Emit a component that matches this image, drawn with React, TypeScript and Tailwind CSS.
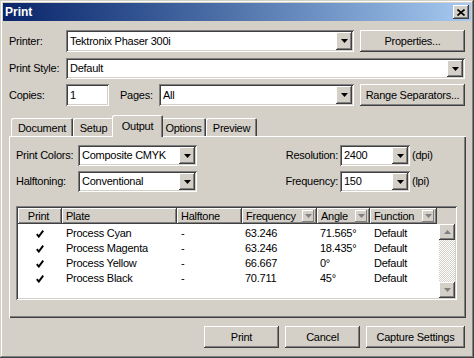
import React from "react";

const raised =
  "shadow-[inset_-1px_-1px_#404040,inset_1px_1px_#ffffff,inset_-2px_-2px_#808080,inset_2px_2px_#d4d0c8]";
const sunken =
  "shadow-[inset_1px_1px_#808080,inset_-1px_-1px_#ffffff,inset_2px_2px_#404040,inset_-2px_-2px_#d4d0c8]";

function Arrow({ up = false, color = "#000" }: { up?: boolean; color?: string }) {
  return (
    <svg width="7" height="4" viewBox="0 0 7 4">
      <polygon points={up ? "3.5,0 7,4 0,4" : "0,0 7,0 3.5,4"} fill={color} />
    </svg>
  );
}

function Combo({ value, w, h = 21 }: { value: string; w: string; h?: number }) {
  return (
    <div className={`${w} ${sunken} bg-white flex items-stretch p-[2px]`} style={{ height: h }}>
      <div className="flex-1 pl-[2px] flex items-center leading-none">{value}</div>
      <div className={`w-[16px] bg-[#d4d0c8] ${raised} flex items-center justify-center`}>
        <Arrow />
      </div>
    </div>
  );
}

function Button({ label, w }: { label: string; w: string }) {
  return (
    <div className={`${w} h-[22px] bg-[#d4d0c8] ${raised} flex items-center justify-center`}>
      {label}
    </div>
  );
}

function Tab({ label, w, active = false }: { label: string; w: string; active?: boolean }) {
  if (active) {
    return (
      <div
        className={`${w} h-[22px] -mx-[2px] -mb-[1px] z-10 relative bg-[#d4d0c8] rounded-t-[2px] shadow-[inset_1px_1px_#ffffff,inset_-1px_0_#404040,inset_-2px_0_#808080] flex items-start justify-center pt-[3px]`}
      >
        {label}
      </div>
    );
  }
  return (
    <div
      className={`${w} h-[18px] bg-[#d4d0c8] rounded-t-[2px] shadow-[inset_1px_1px_#ffffff,inset_-1px_0_#404040,inset_-2px_0_#808080] flex items-start justify-center pt-[2px]`}
    >
      {label}
    </div>
  );
}

function Check() {
  return (
    <svg width="8" height="8" viewBox="0 0 8 8">
      <path d="M0.8 4.2 L2.8 6.6 L7.2 0.6" fill="none" stroke="#000" strokeWidth="1.9" />
    </svg>
  );
}

function HeadCell({ label, w, drop = false, center = false }: { label: string; w: string; drop?: boolean; center?: boolean }) {
  return (
    <div
      className={`${w} h-full bg-[#d4d0c8] shadow-[inset_-1px_-1px_#404040,inset_1px_1px_#ffffff,inset_-2px_-2px_#808080] flex items-center ${center ? "justify-center" : "pl-[4px]"} pr-[3px]`}
    >
      <span className={center ? "" : "flex-1"}>{label}</span>
      {drop && (
        <div className={`w-[12px] h-[12px] bg-[#d4d0c8] shadow-[inset_-1px_-1px_#808080,inset_1px_1px_#ffffff] flex items-center justify-center`}>
          <Arrow color="#808080" />
        </div>
      )}
    </div>
  );
}

const plates = [
  { plate: "Process Cyan", freq: "63.246", angle: "71.565°" },
  { plate: "Process Magenta", freq: "63.246", angle: "18.435°" },
  { plate: "Process Yellow", freq: "66.667", angle: "0°" },
  { plate: "Process Black", freq: "70.711", angle: "45°" },
];

export default function App() {
  return (
    <div className="w-[474px] h-[358px] bg-[#d4d0c8] p-[3px] text-[11px] tracking-[-0.25px] text-black font-['Liberation_Sans',Arial,sans-serif] shadow-[inset_-1px_-1px_#404040,inset_1px_1px_#d4d0c8,inset_-2px_-2px_#808080,inset_2px_2px_#ffffff]">
      {/* title bar */}
      <div className="h-[18px] bg-gradient-to-r from-[#0a246a] to-[#a6caf0] flex items-center pl-[2px] pr-[2px]">
        <span className="text-white font-bold text-[12px] tracking-normal flex-1">Print</span>
        <div className={`w-[16px] h-[14px] bg-[#d4d0c8] ${raised} flex items-center justify-center`}>
          <svg width="8" height="7" viewBox="0 0 8 7">
            <path d="M0.5 0.5 L7.5 6.5 M7.5 0.5 L0.5 6.5" stroke="#000" strokeWidth="1.6" />
          </svg>
        </div>
      </div>

      <div className="pl-[6px] pt-[9px]">
        {/* printer */}
        <div className="flex items-center h-[22px]">
          <div className="w-[57px]">Printer:</div>
          <Combo value="Tektronix Phaser 300i" w="w-[288px]" h={22} />
          <div className="ml-[6px]">
            <Button label="Properties..." w="w-[105px]" />
          </div>
        </div>
        {/* style */}
        <div className="flex items-center h-[21px] mt-[6px]">
          <div className="w-[57px]">Print Style:</div>
          <Combo value="Default" w="w-[399px]" />
        </div>
        {/* copies / pages */}
        <div className="flex items-center h-[22px] mt-[5px]">
          <div className="w-[57px]">Copies:</div>
          <div className={`w-[43px] h-[22px] bg-white ${sunken} flex items-center pl-[4px]`}>1</div>
          <div className="w-[50px] pl-[11px]">Pages:</div>
          <Combo value="All" w="w-[195px]" h={22} />
          <div className="ml-[6px]">
            <Button label="Range Separators..." w="w-[105px]" />
          </div>
        </div>

        {/* tabs */}
        <div className="flex items-end h-[21px] mt-[9px] pl-[2px]">
          <Tab label="Document" w="w-[62px]" />
          <Tab label="Setup" w="w-[41px]" />
          <Tab label="Output" w="w-[51px]" active />
          <Tab label="Options" w="w-[45px]" />
          <Tab label="Preview" w="w-[51px]" />
        </div>

        {/* panel */}
        <div className="w-[457px] h-[182px] shadow-[inset_1px_1px_#ffffff,inset_-1px_-1px_#404040,inset_-2px_-2px_#808080] pl-[7px] pt-[9px]">
          <div className="flex items-center h-[21px]">
            <div className="w-[62px]">Print Colors:</div>
            <Combo value="Composite CMYK" w="w-[119px]" />
            <div className="w-[87px]" />
            <div className="w-[56px] text-right pr-[2px]">Resolution:</div>
            <Combo value="2400" w="w-[70px]" />
            <div className="ml-[2px]">(dpi)</div>
          </div>
          <div className="flex items-center h-[21px] mt-[5px]">
            <div className="w-[62px]">Halftoning:</div>
            <Combo value="Conventional" w="w-[119px]" />
            <div className="w-[87px]" />
            <div className="w-[56px] text-right pr-[2px]">Frequency:</div>
            <Combo value="150" w="w-[70px]" />
            <div className="ml-[2px]">(lpi)</div>
          </div>

          {/* list */}
          <div className={`w-[441px] h-[94px] mt-[14px] bg-white ${sunken} p-[2px] flex flex-col`}>
            <div className="h-[16px] flex bg-[#d4d0c8]">
              <HeadCell label="Print" w="w-[44px]" center />
              <HeadCell label="Plate" w="w-[115px]" />
              <HeadCell label="Halftone" w="w-[65px]" />
              <HeadCell label="Frequency" w="w-[75px]" drop />
              <HeadCell label="Angle" w="w-[53px]" drop />
              <HeadCell label="Function" w="w-[67px]" drop />
              <div className="flex-1" />
            </div>
            <div className="flex flex-1">
              <div className="flex-1 pt-[2px]">
                {plates.map((p) => (
                  <div key={p.plate} className="flex h-[15px] items-center">
                    <div className="w-[44px] flex justify-center">
                      <Check />
                    </div>
                    <div className="w-[115px] pl-[4px]">{p.plate}</div>
                    <div className="w-[65px] pl-[4px]">-</div>
                    <div className="w-[75px] pl-[3px]">{p.freq}</div>
                    <div className="w-[53px] pl-[3px]">{p.angle}</div>
                    <div className="w-[67px] pl-[4px]">Default</div>
                  </div>
                ))}
              </div>
              <div className="w-[16px] flex flex-col">
                <div className={`h-[16px] bg-[#d4d0c8] ${raised} flex items-center justify-center`}>
                  <Arrow up color="#808080" />
                </div>
                <div className="flex-1 bg-[repeating-conic-gradient(#ffffff_0%_25%,#d4d0c8_0%_50%)] bg-[length:2px_2px]" />
                <div className={`h-[16px] bg-[#d4d0c8] ${raised} flex items-center justify-center`}>
                  <Arrow color="#808080" />
                </div>
              </div>
            </div>
          </div>
        </div>

        {/* bottom buttons */}
        <div className="flex mt-[8px] pl-[195px] gap-[6px]">
          <Button label="Print" w="w-[75px]" />
          <Button label="Cancel" w="w-[75px]" />
          <Button label="Capture Settings" w="w-[99px]" />
        </div>
      </div>
    </div>
  );
}
